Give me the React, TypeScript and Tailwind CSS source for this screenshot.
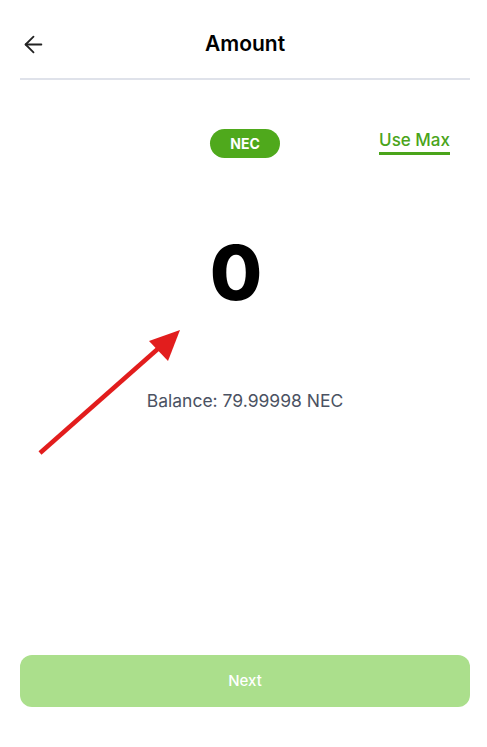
import { ArrowLeft } from "lucide-react";

export default function App() {
    return (
        <div
            className="relative flex h-screen w-full flex-col overflow-hidden bg-white pl-5 pr-[17px]"
            style={{ fontFamily: "Inter, 'Noto Sans', sans-serif" }}
        >
            <header className="relative flex h-[80px] items-start justify-center border-b-2 border-[#dfe2ea] pt-[31px]">
                <button className="absolute left-0 top-[31px] text-[#222]">
                    <ArrowLeft className="h-[27px] w-[27px]" strokeWidth={1.6} />
                </button>
                <h1 className="text-[21px] font-semibold leading-[26px] text-black">Amount</h1>
            </header>

            <div className="relative mt-[48px] flex h-[30px] items-center justify-center">
                <span className="flex h-[29px] w-[70px] items-center justify-center rounded-full bg-[#4fa91c] text-[14px] font-bold text-white">
                    NEC
                </span>
                <button className="absolute right-5 top-[1px] border-b-[3px] border-[#4aa41a] pb-[1px] text-[17px] font-medium leading-[22px] text-[#4aa41a]">
                    Use Max
                </button>
            </div>

            <div className="mt-[68px] flex justify-center pr-[18px]">
                <span className="text-[76px] font-extrabold leading-[92px] text-black">0</span>
            </div>

            <p className="mt-[70px] text-center text-[17.5px] text-[#4b5262]">
                Balance: 79.99998 NEC
            </p>

            <div className="mt-auto mb-[40px]">
                <button className="flex h-[52px] w-full items-center justify-center rounded-xl bg-[#abdf8c] text-[15px] font-medium text-white">
                    Next
                </button>
            </div>

            {/* annotation arrow */}
            <svg
                className="pointer-events-none absolute left-0 top-0"
                width="487"
                height="747"
                viewBox="0 0 487 747"
            >
                <line x1="40" y1="453" x2="160" y2="347" stroke="#e21d1d" strokeWidth="4.5" />
                <polygon points="180,330 149,341 168,361" fill="#e21d1d" />
            </svg>
        </div>
    );
}
